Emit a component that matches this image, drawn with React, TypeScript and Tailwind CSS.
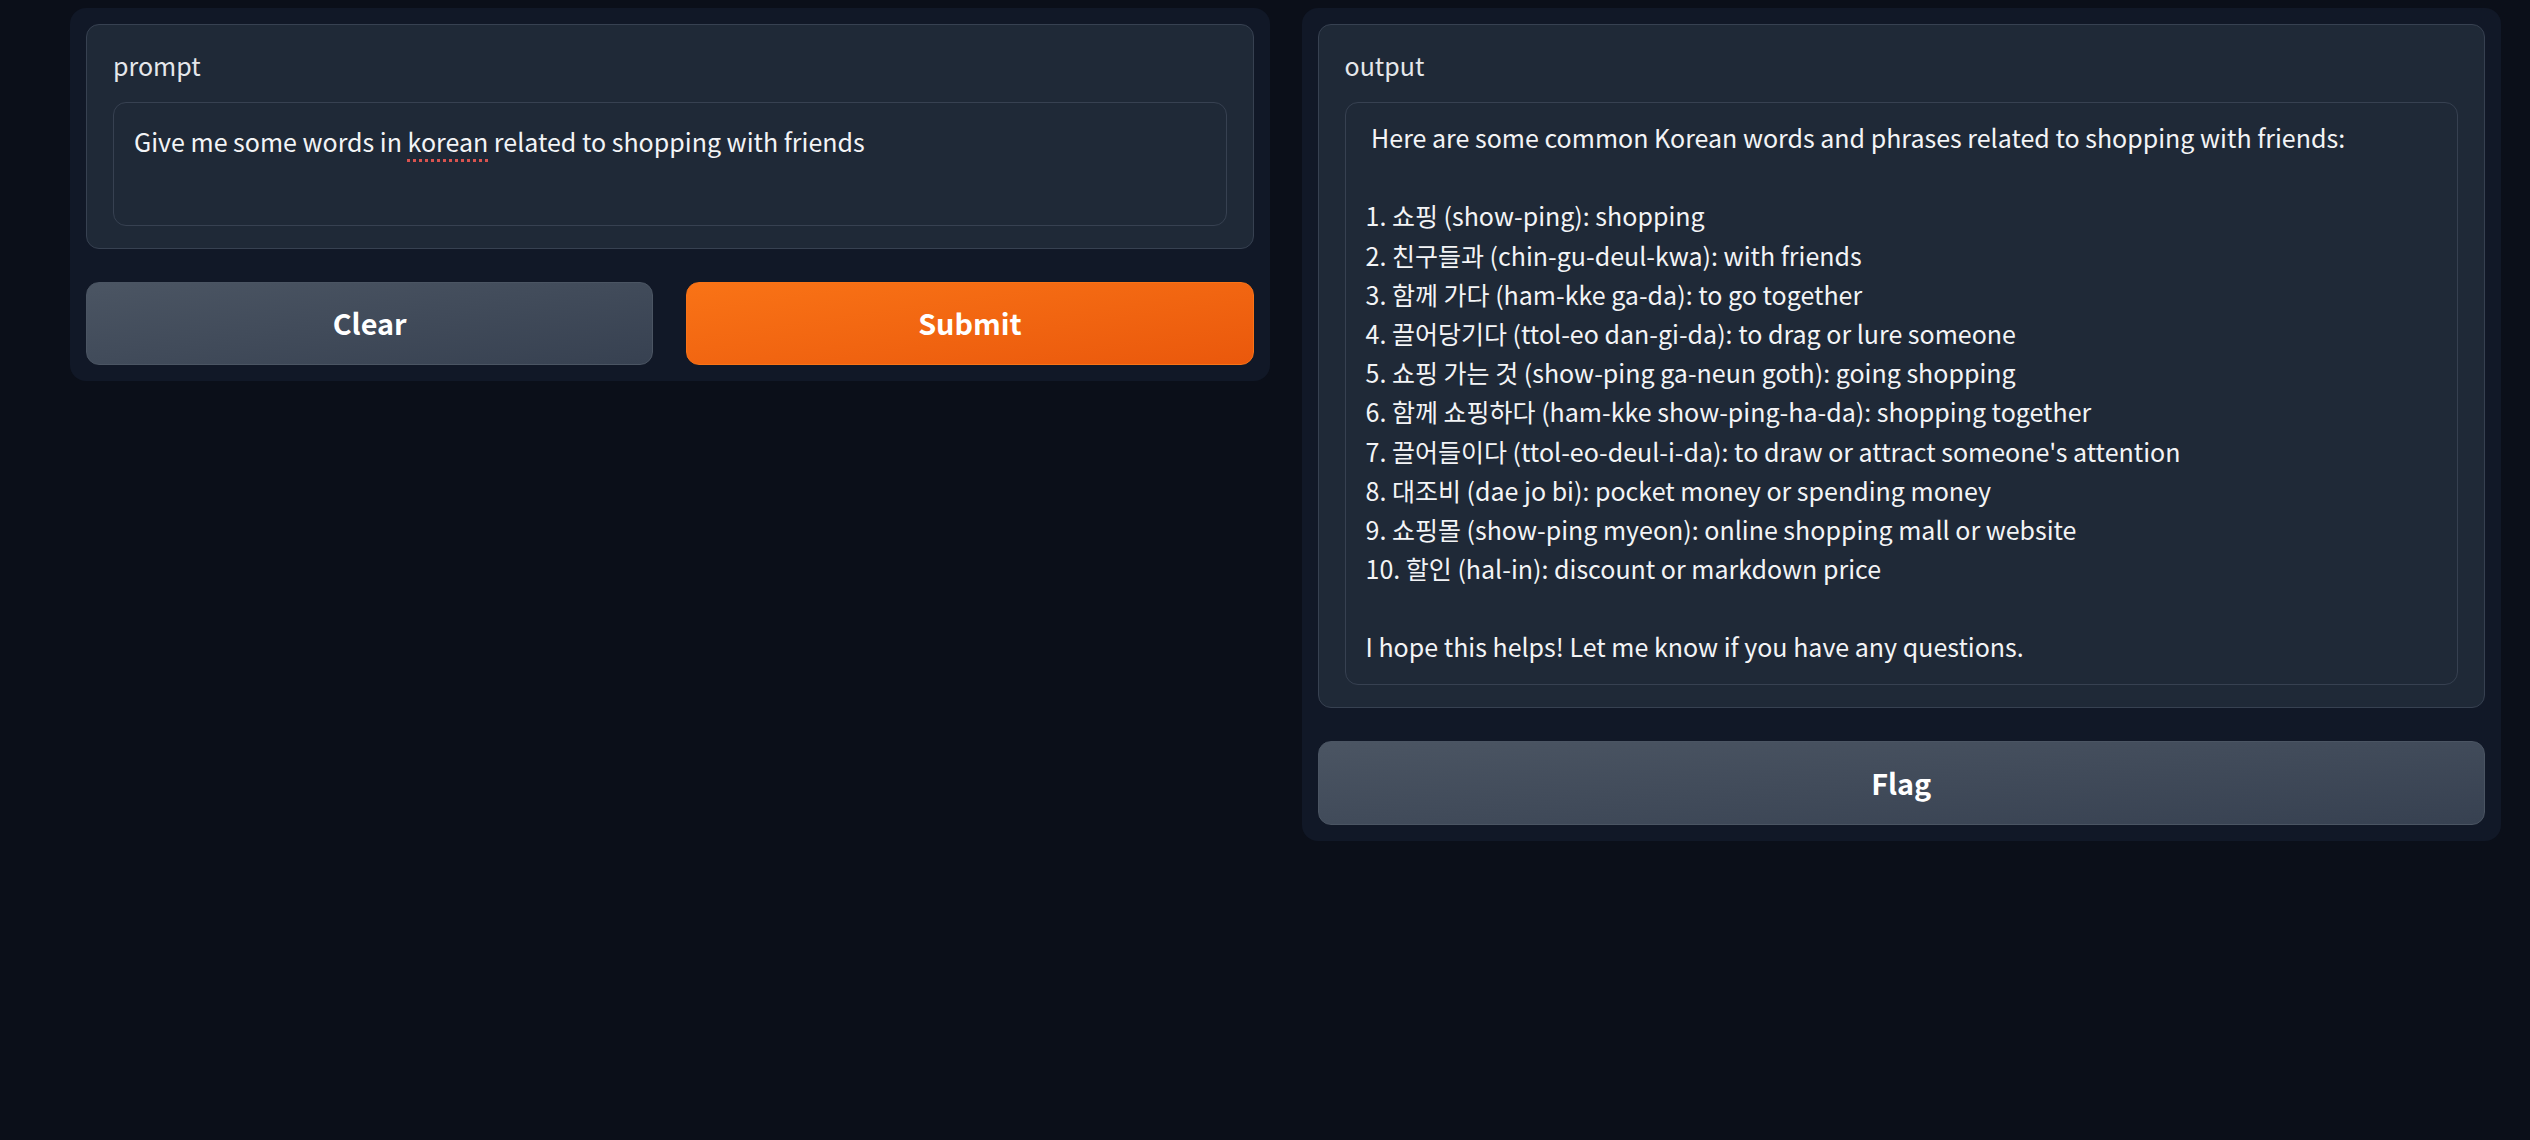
import React from 'react';

const font = "font-['Noto_Sans_CJK_KR','Noto_Sans',sans-serif]";

const outputLines = [
  ' Here are some common Korean words and phrases related to shopping with friends:',
  '',
  '1. 쇼핑 (show-ping): shopping',
  '2. 친구들과 (chin-gu-deul-kwa): with friends',
  '3. 함께 가다 (ham-kke ga-da): to go together',
  '4. 끌어당기다 (ttol-eo dan-gi-da): to drag or lure someone',
  '5. 쇼핑 가는 것 (show-ping ga-neun goth): going shopping',
  '6. 함께 쇼핑하다 (ham-kke show-ping-ha-da): shopping together',
  "7. 끌어들이다 (ttol-eo-deul-i-da): to draw or attract someone's attention",
  '8. 대조비 (dae jo bi): pocket money or spending money',
  '9. 쇼핑몰 (show-ping myeon): online shopping mall or website',
  '10. 할인 (hal-in): discount or markdown price',
  '',
  'I hope this helps! Let me know if you have any questions.',
];

const Block: React.FC<{ label: string; children: React.ReactNode }> = ({ label, children }) => (
  <div className="rounded-[13px] border border-[#374151] bg-[#1f2937] px-[26px] pt-[24px] pb-[22px]">
    <div className="mb-[20px] text-[25px] leading-[33px] text-[#e5e7eb]">{label}</div>
    {children}
  </div>
);

const App: React.FC = () => {
  return (
    <div className={`min-h-[1140px] w-full bg-[#0b0f19] ${font}`}>
      <div className="flex items-start gap-[32px] pl-[70px] pr-[29px] pt-[8px]">
        {/* Input column */}
        <div className="flex flex-1 flex-col gap-[33px] rounded-[16px] bg-[#111827] p-[16px]">
          <Block label="prompt">
            <div className="h-[124px] whitespace-pre rounded-[13px] border border-[#374151] bg-[#1f2937] px-[20px] pt-[19px] text-[25px] leading-[39.2px] text-[#f3f4f6]">
              Give me some words in{' '}
              <span className="underline decoration-dotted decoration-[#d9534f] decoration-[3px] underline-offset-[7px]">korean</span>{' '}
              related to shopping with friends
            </div>
          </Block>
          <div className="flex gap-[33px]">
            <button className="h-[83px] flex-1 rounded-[13px] border border-[#4b5563] bg-gradient-to-br from-[#4b5563] to-[#374151] pb-[2px] text-[28.8px] font-bold text-white">
              Clear
            </button>
            <button className="h-[83px] flex-1 rounded-[13px] border border-[#f97316] bg-gradient-to-br from-[#f97316] to-[#ea580c] pb-[2px] text-[28.8px] font-bold text-white">
              Submit
            </button>
          </div>
        </div>

        {/* Output column */}
        <div className="flex flex-1 flex-col gap-[33px] rounded-[16px] bg-[#111827] p-[16px]">
          <Block label="output">
            <div className="rounded-[13px] border border-[#374151] bg-[#1f2937] px-[20px] pt-[15px] pb-[17px] text-[25px] leading-[39.2px] text-[#f3f4f6]">
              {outputLines.map((line, i) => (
                <div key={i} className="h-[39.2px] whitespace-pre">
                  {line}
                </div>
              ))}
            </div>
          </Block>
          <button className="h-[84px] w-full rounded-[13px] border border-[#4b5563] bg-gradient-to-br from-[#4b5563] to-[#374151] text-[28.8px] font-bold text-white">
            Flag
          </button>
        </div>
      </div>
    </div>
  );
};

export default App;
